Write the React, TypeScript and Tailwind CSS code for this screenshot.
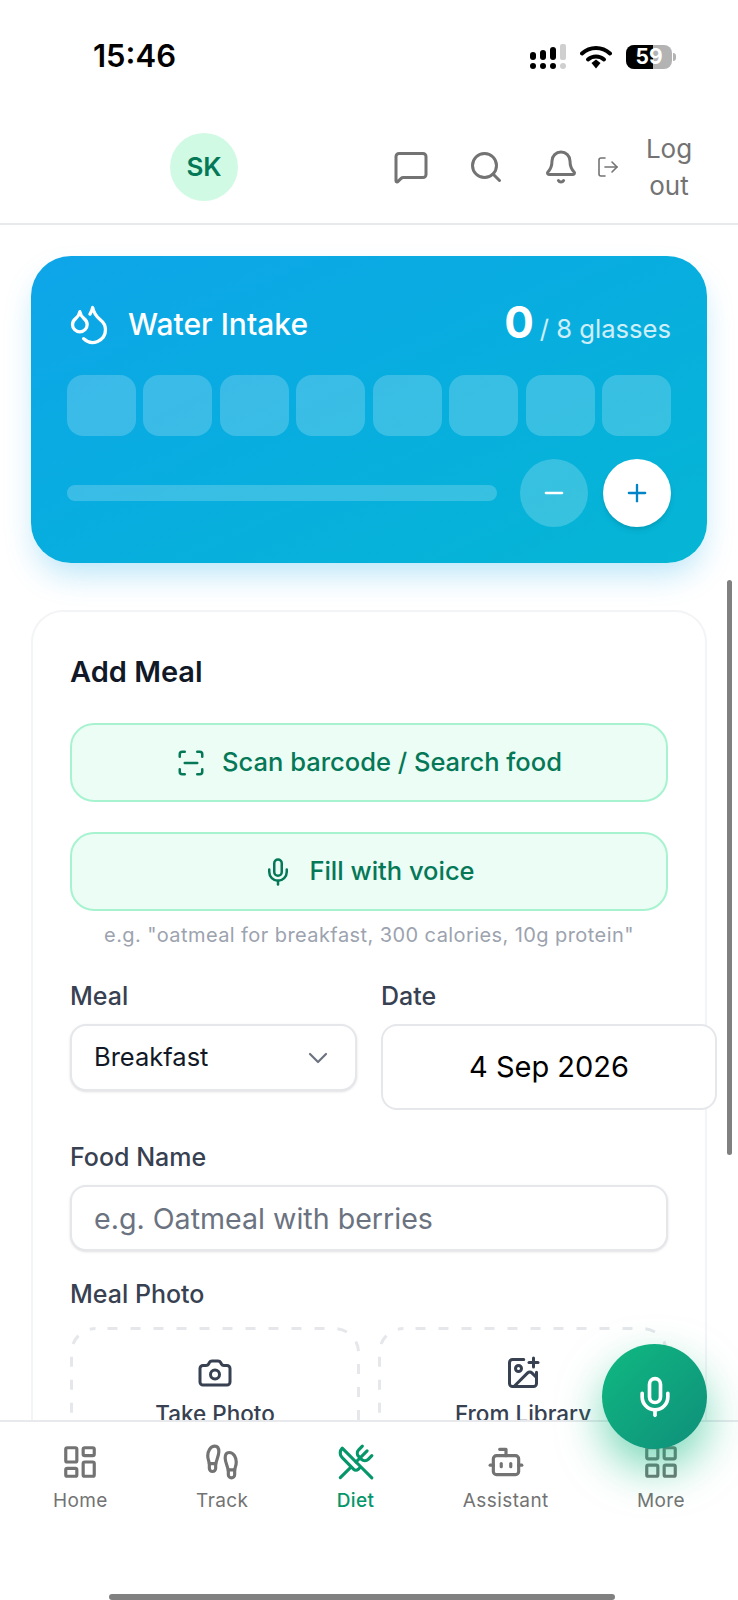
import {
  Bell,
  Bot,
  Camera,
  ChevronDown,
  Droplets,
  Footprints,
  ImagePlus,
  LayoutDashboard,
  LayoutGrid,
  LogOut,
  MessageSquare,
  Mic,
  Minus,
  Plus,
  ScanLine,
  Search,
  UtensilsCrossed,
} from "lucide-react";

const glasses = [0, 1, 2, 3, 4, 5, 6, 7];

const navItems = [
  { label: "Home", icon: LayoutDashboard, active: false },
  { label: "Track", icon: Footprints, active: false },
  { label: "Diet", icon: UtensilsCrossed, active: true },
  { label: "Assistant", icon: Bot, active: false },
  { label: "More", icon: LayoutGrid, active: false },
];

function StatusIcons() {
  return (
    <div className="mt-[3px] flex items-center">
      <svg width="38" height="26" viewBox="0 0 38 26" className="mr-[13px]">
        <rect x="1" y="8" width="6" height="8" rx="3" fill="#000" />
        <rect x="11" y="6" width="6" height="10" rx="3" fill="#000" />
        <rect x="21" y="3" width="6" height="13" rx="3" fill="#000" />
        <rect x="31" y="0" width="6" height="16" rx="2" fill="#cfcfcf" />
        <circle cx="4" cy="22" r="3" fill="#000" />
        <circle cx="14" cy="22" r="3" fill="#000" />
        <circle cx="24" cy="22" r="3" fill="#000" />
        <circle cx="34" cy="22" r="3" fill="#cfcfcf" />
      </svg>
      <svg width="32" height="24" viewBox="0 0 32 24" className="mr-[14px]">
        <path d="M2 8.5C10 1 22 1 30 8.5" fill="none" stroke="#000" strokeWidth="4" strokeLinecap="round" />
        <path d="M8 14.5C12.5 10.5 19.5 10.5 24 14.5" fill="none" stroke="#000" strokeWidth="4" strokeLinecap="round" />
        <path d="M11.5 18L16 14.5L20.5 18L16 23.5Z" fill="#000" />
      </svg>
      <div className="flex h-6 w-[46px] overflow-hidden rounded-lg bg-[#b3b3b3]">
        <div className="h-full w-[27px] bg-black" />
        <span className="-ml-[27px] flex w-[46px] items-center justify-center text-[21px] font-bold text-white">59</span>
      </div>
      <div className="ml-px h-2 w-[3px] rounded-r-sm bg-[#b3b3b3]" />
    </div>
  );
}

function Header() {
  return (
    <header className="flex h-[115px] items-center border-b-2 border-[#e8e9ec] bg-white pl-[170px]">
      <div className="flex h-[68px] w-[68px] items-center justify-center rounded-full bg-[#d1fae5] text-[26px] font-semibold text-[#047857]">
        SK
      </div>
      <MessageSquare className="ml-[155px] h-9 w-9 text-[#737373]" strokeWidth={2} />
      <Search className="ml-[39px] h-9 w-9 text-[#737373]" strokeWidth={2} />
      <Bell className="ml-[39px] h-9 w-9 text-[#737373]" strokeWidth={2} />
      <LogOut className="ml-[17px] h-6 w-6 text-[#737373]" strokeWidth={1.6} />
      <div className="ml-[24px] w-[50px] text-center text-[26px] leading-[37px] text-[#737373]">Log out</div>
    </header>
  );
}

function WaterCard() {
  return (
    <section className="mx-[31px] mt-[31px] h-[307px] rounded-[40px] bg-gradient-to-br from-[#0ea5e9] to-[#06b6d4] px-[36px] pt-[45px] shadow-[0_16px_32px_-6px_rgba(14,165,233,0.3)]">
      <div className="flex h-[46px] items-center justify-between">
        <div className="flex items-center gap-[17px]">
          <Droplets className="h-[44px] w-[44px] text-white" strokeWidth={1.8} />
          <span className="text-[30px] font-medium text-white">Water Intake</span>
        </div>
        <div className="flex items-baseline text-white">
          <span className="text-[44px] leading-none font-bold">0</span>
          <span className="ml-[6px] text-[25.6px] text-white/80">/ 8 glasses</span>
        </div>
      </div>
      <div className="mt-[28px] grid grid-cols-8 gap-[7.5px]">
        {glasses.map((g) => (
          <div key={g} className="h-[61px] rounded-[16px] bg-white/20" />
        ))}
      </div>
      <div className="mt-[23px] flex items-center">
        <div className="h-4 flex-1 rounded-full bg-white/20" />
        <button className="ml-[23px] flex h-[68px] w-[68px] items-center justify-center rounded-full bg-white/20 text-white">
          <Minus className="h-7 w-7" strokeWidth={2} />
        </button>
        <button className="ml-[15px] flex h-[68px] w-[68px] items-center justify-center rounded-full bg-white text-[#0284c7] shadow-md">
          <Plus className="h-7 w-7" strokeWidth={2} />
        </button>
      </div>
    </section>
  );
}

function GreenButton({ icon: Icon, label }: { icon: typeof Mic; label: string }) {
  return (
    <button className="flex h-[79px] w-full items-center justify-center gap-[16px] rounded-[24px] border-2 border-[#a7f3d0] bg-[#ecfdf5] text-[25.5px] font-[450] text-[#047857]">
      <Icon className="h-[30px] w-[30px]" strokeWidth={2} />
      {label}
    </button>
  );
}

function PhotoBox({ icon: Icon, label }: { icon: typeof Camera; label: string }) {
  return (
    <div className="relative flex h-[160px] flex-col items-center pt-[28px]">
      <svg width="290" height="160" className="absolute inset-0">
        <rect x="1.5" y="1.5" width="287" height="157" rx="24" fill="none" stroke="#e5e7eb" strokeWidth="3" strokeDasharray="10 13" strokeDashoffset="11" />
      </svg>
      <Icon className="h-9 w-9 text-[#374151]" strokeWidth={2} />
      <span className="mt-[6px] text-[22.5px] font-[450] text-[#374151]">{label}</span>
    </div>
  );
}

function MealCard() {
  return (
    <section className="mx-[31px] mt-[47px] rounded-t-[32px] border-2 border-b-0 border-[#f3f4f6] bg-white px-[37px] pt-[41px]">
      <h2 className="text-[29px] leading-[38px] font-semibold text-[#111827]">Add Meal</h2>

      <div className="mt-[32px]">
        <GreenButton icon={ScanLine} label="Scan barcode / Search food" />
      </div>
      <div className="mt-[30px]">
        <GreenButton icon={Mic} label="Fill with voice" />
      </div>
      <p className="mt-[10px] text-center text-[20px] leading-[28px] tracking-[0.42px] text-[#9ca3af]">
        e.g. "oatmeal for breakfast, 300 calories, 10g protein"
      </p>

      <div className="mt-[29px] flex gap-[24px]">
        <div className="w-[287px] shrink-0">
          <label className="block text-[25px] leading-[36px] font-[450] text-[#374151]">Meal</label>
          <div className="mt-[10px] flex h-[67px] items-center justify-between rounded-[16px] border-2 border-[#e5e7eb] bg-white pr-[21px] pl-[22px] text-[25.5px] text-[#111827] shadow-sm">
            Breakfast
            <ChevronDown className="h-8 w-8 text-[#6b7280]" strokeWidth={1.6} />
          </div>
        </div>
        <div className="w-[336px] shrink-0">
          <label className="block text-[25px] leading-[36px] font-[450] text-[#374151]">Date</label>
          <div className="mt-[10px] flex h-[86px] items-center justify-center rounded-[16px] border-2 border-[#e5e7eb] bg-white text-[29px] text-black">
            4 Sep 2026
          </div>
        </div>
      </div>

      <label className="mt-[29px] block text-[25px] leading-[36px] font-[450] text-[#374151]">Food Name</label>
      <input
        readOnly
        placeholder="e.g. Oatmeal with berries"
        className="mt-[10px] h-[66px] w-full rounded-[16px] border-2 border-[#e5e7eb] bg-white px-[22px] text-[28.6px] shadow-sm placeholder:text-[#6b7280]"
      />

      <label className="mt-[25px] block text-[25px] leading-[36px] font-[450] text-[#374151]">Meal Photo</label>
      <div className="mt-[15px] grid grid-cols-2 gap-[18px]">
        <PhotoBox icon={Camera} label="Take Photo" />
        <PhotoBox icon={ImagePlus} label="From Library" />
      </div>
    </section>
  );
}

function BottomNav() {
  return (
    <nav className="h-[180px] shrink-0 border-t-2 border-[#e8e9ec] bg-white">
      <div className="flex justify-between px-[53px] pt-[21px]">
        {navItems.map((item) => (
          <div key={item.label} className={`flex flex-col items-center ${item.active ? "text-[#059669]" : "text-[#737373]"}`}>
            <item.icon className="h-[38px] w-[38px]" strokeWidth={2} />
            <span className={`mt-[7px] text-[19px] leading-[26px] tracking-[0.4px] ${item.active ? "font-medium" : ""}`}>{item.label}</span>
          </div>
        ))}
      </div>
      <div className="mt-[80px] ml-[109px] h-[6px] w-[506px] rounded-full bg-[#808080]" />
    </nav>
  );
}

export default function App() {
  return (
    <div className="relative flex h-[1600px] w-[738px] flex-col overflow-hidden bg-white font-[Inter,sans-serif]">
      <div className="flex h-[110px] shrink-0 items-start justify-between pt-[41px] pr-[62px] pl-[93px]">
        <span className="text-[31px] leading-[30px] font-semibold text-black">15:46</span>
        <StatusIcons />
      </div>
      <Header />
      <main className="min-h-0 flex-1 overflow-hidden">
        <WaterCard />
        <MealCard />
      </main>
      <BottomNav />

      <div className="absolute top-[580px] right-[6px] h-[575px] w-[5px] rounded-full bg-[#808080]" />

      <button className="absolute top-[1344px] left-[602px] flex h-[105px] w-[105px] items-center justify-center rounded-full bg-gradient-to-br from-[#10b981] to-[#0f8f7a] text-white shadow-[0_20px_44px_rgba(16,185,129,0.55)]">
        <Mic className="h-[44px] w-[44px]" strokeWidth={2} />
      </button>
    </div>
  );
}
